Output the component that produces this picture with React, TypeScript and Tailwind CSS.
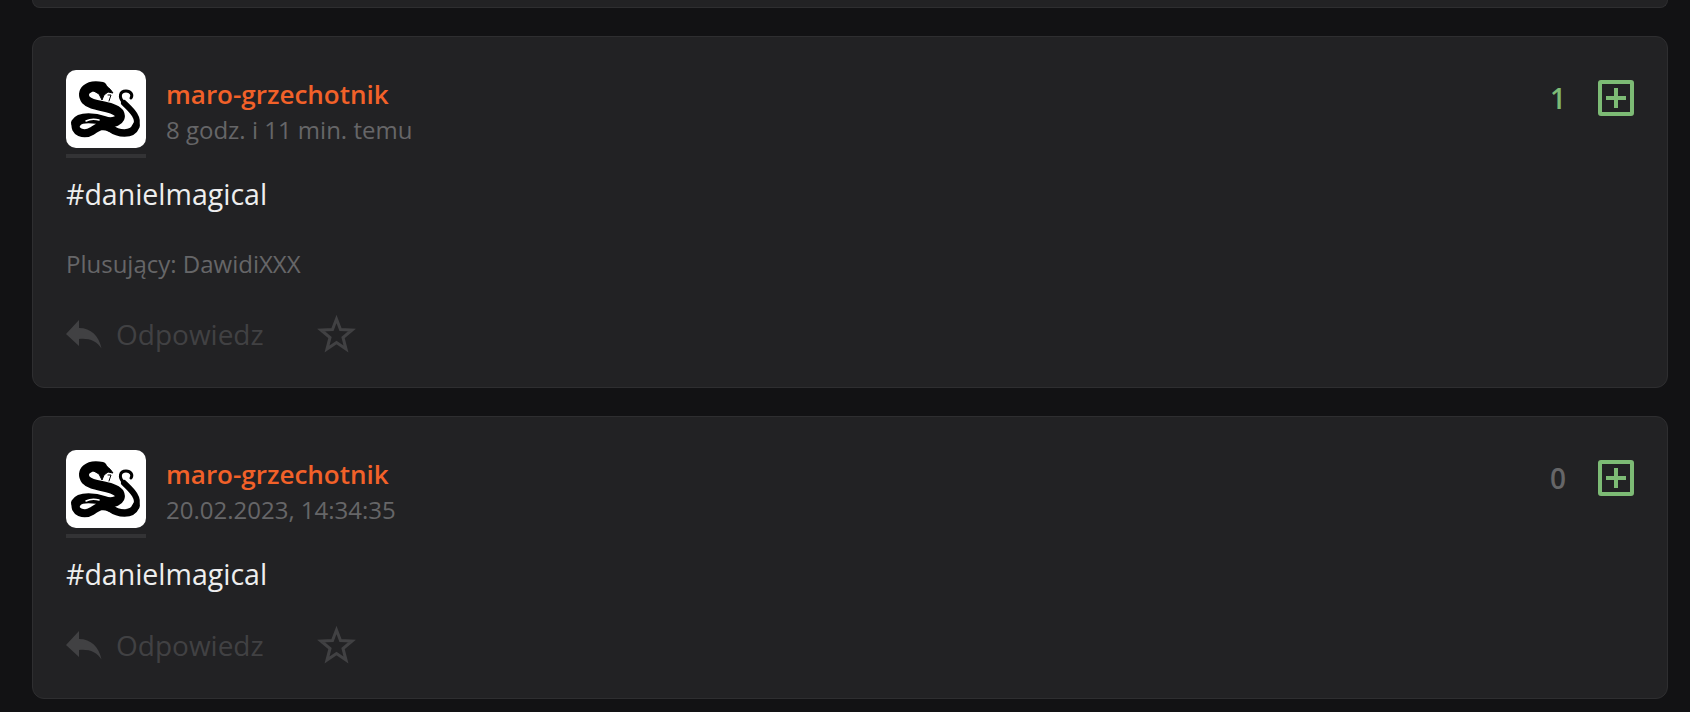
import type { ReactNode } from 'react';

interface Post {
  id: number;
  author: string;
  time: string;
  score: number;
  likers?: string;
}

const posts: Post[] = [
  { id: 1, author: 'maro-grzechotnik', time: '8 godz. i 11 min. temu', score: 1, likers: 'DawidiXXX' },
  { id: 2, author: 'maro-grzechotnik', time: '20.02.2023, 14:34:35', score: 0 },
];

function SnakeAvatar() {
  return (
    <div className="w-20 shrink-0">
      <div className="w-20 h-[78px] bg-white rounded-[10px] overflow-hidden">
        <svg viewBox="0 0 80 78" className="w-20 h-[78px]" fill="none" stroke="#000" strokeLinecap="round" strokeLinejoin="round">
          {/* upper S */}
          <path d="M36 17 C22 14 14 22 20 30 C26 37 46 35 53 43 C57 51 46 54 38 51 C30 48 14 46 10 53" strokeWidth="10" />
          {/* lower loop */}
          <path d="M10 53 C7 62 18 66 26 61 C32 57 36 54 44 58" strokeWidth="8" />
          {/* right side, gets thinner towards the tail */}
          <path d="M44 58 C52 64 66 66 70 56" strokeWidth="7.5" />
          <path d="M70 56 C74 47 64 39 58 33" strokeWidth="6" />
          <path d="M58 33 C52 27 54 21 60 21 C65 21 67 25 65 28" strokeWidth="3" />
          {/* head */}
          <path d="M28 14 C34 12 41 14 47 23 L42 22 L38 25 L36 30 L33 24 L26 20 Z" fill="#000" strokeWidth="1" />
          <path d="M42 25 L45 25 L43 31" strokeWidth="1" />
          {/* highlight on the loop */}
          <path d="M20 51 C24 49 29 49 33 50" stroke="#fff" strokeWidth="1.5" />
        </svg>
      </div>
      <div className="h-1 mt-1.5 bg-[#333335]" />
    </div>
  );
}

function PlusBox() {
  return (
    <button className="w-9 h-9 rounded-[3px] border-[4px] border-[#7dbb75] flex items-center justify-center">
      <svg viewBox="0 0 20 20" className="w-5 h-5" fill="#7dbb75">
        <rect x="8" y="0" width="4" height="20" />
        <rect x="0" y="8" width="20" height="4" />
      </svg>
    </button>
  );
}

function ReplyArrow() {
  return (
    <svg viewBox="0 0 36 30" className="w-9 h-[30px]" fill="currentColor">
      <path d="M0 15 L13 1 L13 9 C25 9 33 17 35.5 29.5 C31 22 23 19 13 20 L13 27 Z" />
    </svg>
  );
}

function StarOutline() {
  return (
    <svg viewBox="0 0 39 38" className="w-[39px] h-[38px] ml-[53px]" fill="none" stroke="currentColor" strokeWidth="3" strokeLinejoin="miter">
      <path d="M19.5 4 L23.5 14.5 L35 15 L26 22.5 L29 34 L19.5 27.5 L10 34 L13 22.5 L4 15 L15.5 14.5 Z" />
    </svg>
  );
}

function Muted({ className, children }: { className: string; children: ReactNode }) {
  return <div className={`text-[#666668] ${className}`}>{children}</div>;
}

function PostCard({ post }: { post: Post }) {
  return (
    <div className="bg-[#222224] border border-[#2e2e30] rounded-xl pt-[33px] px-[33px] pb-[33px]">
      {/* Header */}
      <div className="flex items-start justify-between">
        <div className="flex gap-5">
          <SnakeAvatar />
          <div className="pt-[7px]">
            <div className="text-[26px] leading-[35px] font-semibold text-[#f26129]">{post.author}</div>
            <Muted className="text-[24px] leading-[35px]">{post.time}</Muted>
          </div>
        </div>
        <div className="flex items-center gap-[32px] mt-[10px]">
          <span className={`text-[28px] leading-9 font-semibold ${post.score > 0 ? 'text-[#7dbb75]' : 'text-[#666668]'}`}>
            {post.score}
          </span>
          <PlusBox />
        </div>
      </div>

      {/* Body */}
      <div className="mt-[17px] text-[28.5px] leading-[38px] text-[#eeeeee]">#danielmagical</div>

      {post.likers && <Muted className="mt-[35px] text-[24px] leading-[32px]">Plusujący: {post.likers}</Muted>}

      {/* Actions */}
      <div className={`flex items-center h-10 text-[#414143] ${post.likers ? 'mt-[34px]' : 'mt-[32px]'}`}>
        <ReplyArrow />
        <span className="ml-[14px] text-[28px] leading-[38px]">Odpowiedz</span>
        <StarOutline />
      </div>
    </div>
  );
}

export default function App() {
  return (
    <div className="min-h-screen bg-[#121214] pl-[32px] pr-[22px] font-['Open_Sans',sans-serif]">
      <div className="h-2 bg-[#222224] border-x border-b border-[#2e2e30] rounded-b-xl" />
      <div className="flex flex-col gap-[28px] mt-[28px]">
        {posts.map((post) => (
          <PostCard key={post.id} post={post} />
        ))}
      </div>
    </div>
  );
}
